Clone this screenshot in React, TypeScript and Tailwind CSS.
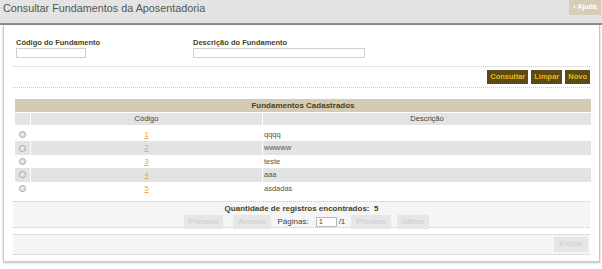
import React from 'react';

const rows = [
  { code: '1', desc: 'qqqq' },
  { code: '2', desc: 'wwwww' },
  { code: '3', desc: 'teste' },
  { code: '4', desc: 'aaa' },
  { code: '5', desc: 'asdadas' },
];

const Radio = () => (
  <span className="block w-[7px] h-[7px] rounded-full border border-[#a0a0a0] bg-[#e8e8e8]" />
);

const DisabledBtn = ({ label, className = '' }: { label: string; className?: string }) => (
  <span className={`h-[14px] px-[5px] flex items-center bg-[#e6e6e6] text-[#cdcdcd] text-[8px] ${className}`}>
    {label}
  </span>
);

export default function App() {
  return (
    <div className="w-[602px] h-[269px] bg-white font-['Liberation_Sans',Arial,sans-serif] overflow-hidden">
      {/* Header */}
      <div className="h-[25px] bg-[#e3e3e3] flex items-start justify-between border-b-2 border-[#8c8c84]">
        <h1 className="pl-[3px] pt-[1px] text-[10.8px] leading-[14px] text-[#555]">
          Consultar Fundamentos da Aposentadoria
        </h1>
        <span className="mr-[1px] h-[15px] w-[32px] bg-[#d5cdb5] text-white text-[7px] font-bold flex items-center justify-center">
          › Ajuda
        </span>
      </div>

      {/* Panel */}
      <div className="ml-[3px] mr-[2px] h-[237px] border-l border-r border-b border-[#c8c8c8] shadow-[0_1px_2px_rgba(0,0,0,0.25)] px-[9px]">
        {/* Filters */}
        <div className="flex pt-[13px] pb-[8px] border-b border-dotted border-[#c8c8c8]">
          <div className="w-[180px] pl-[3px] flex flex-col gap-[1px]">
            <label className="text-[7.5px] leading-[9px] font-bold text-[#4a3f1a]">Código do Fundamento</label>
            <span className="w-[70px] h-[10px] border border-[#cfcfcf] bg-white" />
          </div>
          <div className="flex flex-col gap-[1px]">
            <label className="text-[7.5px] leading-[9px] font-bold text-[#4a3f1a]">Descrição do Fundamento</label>
            <span className="w-[172px] h-[10px] border border-[#cfcfcf] bg-white" />
          </div>
        </div>

        {/* Actions */}
        <div className="flex justify-end gap-[3px] py-[3px] border-b border-dotted border-[#c8c8c8]">
          {['Consultar', 'Limpar', 'Novo'].map((b) => (
            <span key={b} className="h-[14px] px-[3px] flex items-center bg-[#5b4a12] text-[#e9b91f] font-bold text-[7.5px]">
              {b}
            </span>
          ))}
        </div>

        {/* Table */}
        <div className="mt-[11px] ml-[2px] w-[576px]">
          <div className="h-[13px] bg-[#d3cbb4] flex items-center justify-center text-[8px] font-bold text-[#4a3f1a]">
            Fundamentos Cadastrados
          </div>
          <div className="flex h-[12px] mt-[1px] text-[7.5px] text-[#444]">
            <div className="w-[15px] bg-[#e3e3e3]" />
            <div className="w-[231px] ml-[1px] bg-[#e3e3e3] flex items-center justify-center">Código</div>
            <div className="flex-1 ml-[1px] bg-[#e3e3e3] flex items-center justify-center">Descrição</div>
          </div>
          <div className="mt-[3px]">
            {rows.map((r, i) => (
              <div key={r.code} className="flex h-[13.4px] items-center text-[7.5px]">
                <div className={`w-[15px] h-full flex items-center justify-center ${i % 2 ? 'bg-[#e3e3e3]' : ''}`}>
                  <Radio />
                </div>
                <div className={`w-[231px] ml-[1px] h-full flex items-center justify-center ${i % 2 ? 'bg-[#e3e3e3]' : ''}`}>
                  <span className="text-[#f0a050] underline">{r.code}</span>
                </div>
                <div className={`flex-1 ml-[1px] h-full flex items-center pl-[1px] text-[#555] ${i % 2 ? 'bg-[#e3e3e3]' : ''}`}>
                  {r.desc}
                </div>
              </div>
            ))}
          </div>
        </div>

        {/* Pagination */}
        <div className="mt-[6px] bg-[#f5f5f5] border-t border-b border-dotted border-[#c8c8c8] h-[27px] flex flex-col items-center">
          <div className="text-[8px] leading-[10px] pt-[2px] font-bold text-[#4a3f1a]">
            Quantidade de registros encontrados:&nbsp;&nbsp;5
          </div>
          <div className="flex items-center gap-[6px] text-[8px] text-[#444] mt-[1px] ml-[10px]">
            <DisabledBtn label="Primeira" className="mr-[4px]" />
            <DisabledBtn label="Anterior" />
            <span>Páginas:</span>
            <span className="ml-[1px] w-[21px] h-[10px] border border-[#bbb] bg-white text-[7.5px] leading-[8px] pl-[2px]">1</span>
            <span className="-ml-[4px]">/1</span>
            <DisabledBtn label="Próxima" />
            <DisabledBtn label="Última" />
          </div>
        </div>

        {/* Delete */}
        <div className="mt-[6px] bg-[#f5f5f5] border-t border-b border-dotted border-[#c8c8c8] h-[21px] flex items-center justify-end pr-[2px]">
          <DisabledBtn label="Excluir" className="h-[15px]" />
        </div>
      </div>
    </div>
  );
}
